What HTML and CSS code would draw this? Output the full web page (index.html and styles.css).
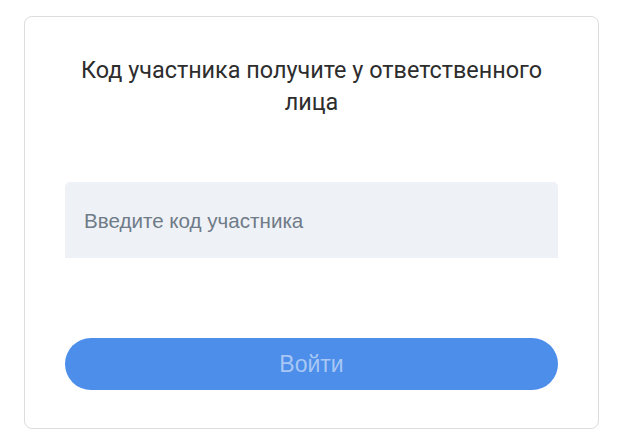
FILE: index.html
```html
<!DOCTYPE html>
<html lang="ru">
<head>
<meta charset="utf-8">
<link rel="stylesheet" href="styles.css">
</head>
<body>
<div class="card">
  <p class="title">Код участника получите у ответственного лица</p>
  <div class="field"><span class="placeholder">Введите код участника</span></div>
  <button class="btn">Войти</button>
</div>
</body>
</html>
```
FILE: styles.css
```css
html, body { margin: 0; background: #ffffff; }
body { padding: 16px 0 0 24px; }
.card {
  box-sizing: border-box;
  width: 575px;
  height: 413px;
  border: 1px solid #dcdcdc;
  border-radius: 8px;
  background: #ffffff;
  padding: 37px 40px 0 40px;
  display: flex;
  flex-direction: column;
}
.title {
  margin: 0;
  font-family: Roboto, "Liberation Sans", sans-serif;
  font-size: 23.4px;
  line-height: 32px;
  color: #2d2d2d;
  text-align: center;
}
.field {
  margin-top: 64px;
  height: 76px;
  background: #eef1f5;
  border-radius: 5px 5px 0 0;
  display: flex;
  align-items: center;
  padding-left: 19px;
}
.placeholder {
  font-family: "Liberation Sans", Arial, sans-serif;
  font-size: 20.6px;
  color: #6f7b88;
  padding-top: 2px;
}
.btn {
  margin-top: 80px;
  height: 52px;
  border: none;
  border-radius: 26px;
  background: #4c8ee9;
  color: #a8c7f5;
  font-family: "Liberation Sans", Arial, sans-serif;
  font-size: 23px;
  padding: 0;
}
```
